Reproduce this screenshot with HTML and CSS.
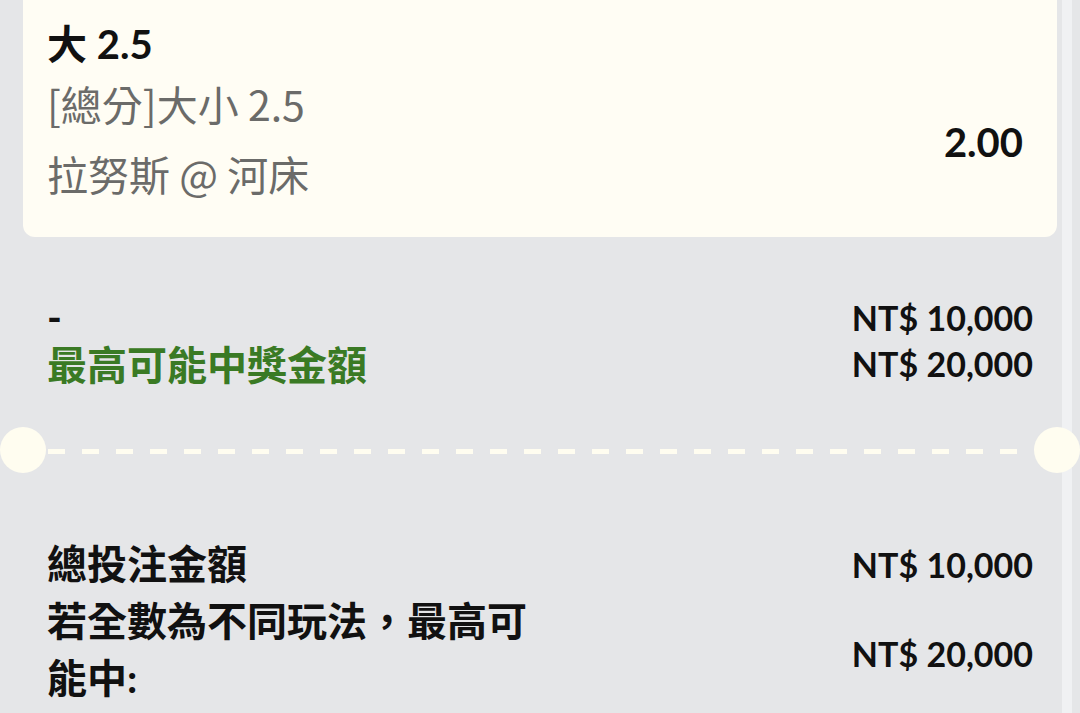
FILE: index.html
```html
<!DOCTYPE html>
<html lang="zh-Hant">
  <head>
    <meta charset="UTF-8" />
    <meta name="viewport" content="width=device-width, initial-scale=1.0" />
    <title>投注單</title>
    <link rel="stylesheet" href="styles.css">
  </head>
  <body>
    <div class="page">
      <main class="slip">
        <section class="bet-card">
          <div class="bet-info">
            <div class="bet-pick">大 2.5</div>
            <div class="bet-market">[總分]大小 2.5</div>
            <div class="bet-match">拉努斯 @ 河床</div>
          </div>
          <div class="bet-odds">2.00</div>
        </section>

        <section class="stake">
          <div class="row">
            <span class="label">-</span>
            <span class="amount">NT$ 10,000</span>
          </div>
          <div class="row">
            <span class="label win">最高可能中獎金額</span>
            <span class="amount">NT$ 20,000</span>
          </div>
        </section>

        <div class="divider">
          <span class="notch"></span>
          <span class="dash"></span>
          <span class="notch"></span>
        </div>

        <section class="summary">
          <div class="row">
            <span class="label">總投注金額</span>
            <span class="amount">NT$ 10,000</span>
          </div>
          <div class="row">
            <span class="label wrap">若全數為不同玩法，最高可能中:</span>
            <span class="amount lower">NT$ 20,000</span>
          </div>
        </section>
      </main>
      <div class="scroll-track"></div>
    </div>
  </body>
</html>
```

FILE: styles.css
```css
body {
  margin: 0;
  padding: 0;
  background: #e5e6e8;
  font-family: Lato, "Noto Sans CJK TC", sans-serif;
  color: #111;
  overflow: hidden;
}

.page {
  display: flex;
  height: 713px;
}

.slip {
  width: 1034px;
  padding: 0 5px 0 23px;
  flex-shrink: 0;
}

.scroll-track {
  width: 10px;
  background: #f0f1f3;
  flex-shrink: 0;
}

.bet-card {
  display: flex;
  justify-content: space-between;
  background: #fffdf4;
  border-radius: 0 0 12px 12px;
  padding: 20px 34px 29px 24px;
}

.bet-pick {
  font-size: 40px;
  font-weight: 700;
  line-height: 48px;
}

.bet-market,
.bet-match {
  font-family: "Noto Sans CJK TC", sans-serif;
  font-size: 41px;
  line-height: 70px;
  color: #6b6b69;
}

.bet-odds {
  align-self: center;
  margin-top: 56px;
  font-size: 40px;
  font-weight: 700;
}

.stake {
  margin-top: 57px;
  padding: 0 24px;
}

.stake .row {
  display: flex;
  justify-content: space-between;
  align-items: center;
  height: 46px;
}

.label {
  font-size: 40px;
  font-weight: 700;
}

.win {
  color: #3a7a24;
}

.amount {
  font-size: 34px;
  font-weight: 700;
}

.divider {
  display: flex;
  align-items: center;
  margin: 41px -23px 0;
  height: 46px;
}

.notch {
  position: relative;
  z-index: 1;
  width: 46px;
  height: 46px;
  border-radius: 50%;
  background: #fffdf0;
  flex-shrink: 0;
}

.dash {
  flex: 1;
  height: 5px;
  margin: 2px 2px 0;
  background: repeating-linear-gradient(
    to right,
    #fffdf0 0,
    #fffdf0 17px,
    transparent 17px,
    transparent 34px
  );
}

.summary {
  margin-top: 63px;
  padding: 0 24px;
}

.summary .row {
  display: flex;
  justify-content: space-between;
  align-items: center;
}

.summary .label {
  line-height: 57px;
}

.summary .wrap {
  width: 50%;
}

.summary .lower {
  padding-top: 6px;
}
```
